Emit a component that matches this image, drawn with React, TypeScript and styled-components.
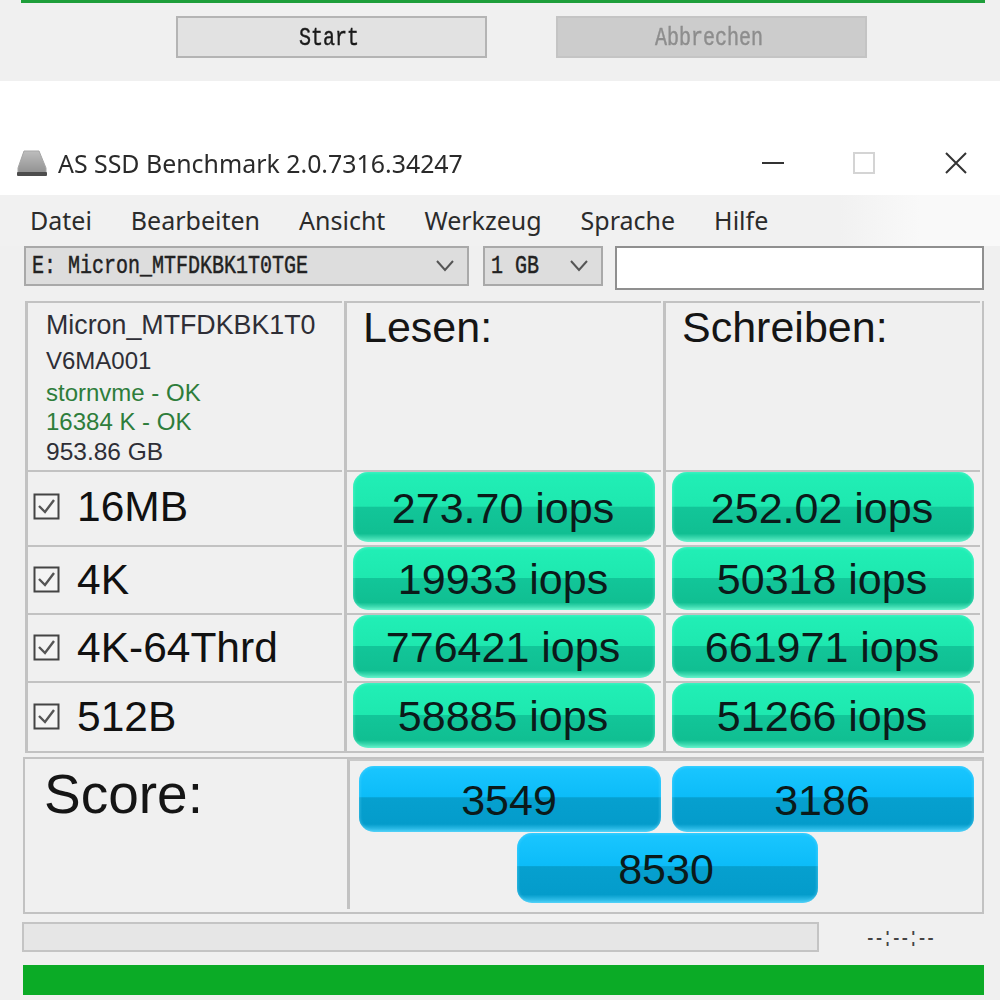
import React from "react";
import styled, { createGlobalStyle } from "styled-components";

const GlobalStyle = createGlobalStyle`
    html, body {
        margin: 0;
        padding: 0;
        background: #ffffff;
    }
    #root {
        width: 1000px;
        height: 1000px;
        overflow: hidden;
    }
`;

const Page = styled.div`
    width: 1000px;
    height: 1000px;
    display: flex;
    flex-direction: column;
    font-family: "Liberation Sans", Arial, sans-serif;
    color: #111;
    filter: blur(0.5px);
`;

const TopPanel = styled.div`
    height: 81px;
    flex: none;
    box-sizing: border-box;
    background: #f0f0f0;
    padding: 0 15px 0 21px;
`;

const TopBar = styled.div`
    height: 3px;
    background: #1e9e3a;
`;

const TopButtons = styled.div`
    display: flex;
    gap: 69px;
    margin: 13px 0 0 155px;
`;

const OldButton = styled.div<{ $disabled?: boolean }>`
    width: 311px;
    height: 42px;
    box-sizing: border-box;
    display: flex;
    align-items: center;
    justify-content: center;
    padding: 2px 5px 0 0;
    font-family: "Liberation Mono", monospace;
    font-size: 20px;
    border: 2px solid ${(p) => (p.$disabled ? "#c4c4c4" : "#b4b4b4")};
    background: ${(p) => (p.$disabled ? "#cccccc" : "#e2e2e2")};
    color: ${(p) => (p.$disabled ? "#8d8d8d" : "#1a1a1a")};
`;

// the original UI font is a tall, narrow bitmap face
const TallText = styled.span`
    display: inline-block;
    transform: scaleY(1.25);
    -webkit-text-stroke: 0.35px currentColor;
`;

const TitleBar = styled.div`
    margin-top: 67px;
    height: 47px;
    flex: none;
    box-sizing: border-box;
    display: flex;
    align-items: center;
    padding: 0 32px 18px 16px;
    background: #ffffff;
`;

const Title = styled.div`
    flex: 1;
    margin-left: 10px;
    font-family: "Noto Sans", sans-serif;
    font-size: 24.9px;
    color: #2a2a2a;
    white-space: nowrap;
`;

const WindowIcon = styled.svg`
    display: block;
    flex: none;
`;

const WindowControls = styled.div`
    display: flex;
    align-items: center;
    gap: 69px;
`;

const Window = styled.div`
    flex: 1;
    display: flex;
    flex-direction: column;
    background: #f0f0f0;
`;

const Menu = styled.div`
    height: 51px;
    flex: none;
    box-sizing: border-box;
    display: flex;
    align-items: center;
    gap: 39px;
    padding: 0 0 2px 30px;
    font-family: "Noto Sans", sans-serif;
    font-size: 25px;
    color: #2b2b2b;
    background: linear-gradient(to right, #f1f1f1 84%, #f9f9f9 92%);
`;

const Toolbar = styled.div`
    display: flex;
    gap: 14px;
    margin: 0 16px 0 24px;
    align-items: flex-start;
    height: 55px;
    flex: none;
`;

const Select = styled.div<{ $width: number }>`
    width: ${(p) => p.$width}px;
    height: 40px;
    box-sizing: border-box;
    display: flex;
    align-items: center;
    justify-content: space-between;
    padding: 0 13px 0 6px;
    background: #dddddd;
    border: 2px solid #a9a9a9;
    font-family: "Liberation Mono", monospace;
    font-size: 20px;
    color: #222;
    white-space: nowrap;
`;

const TextBox = styled.div`
    flex: 1;
    height: 44px;
    box-sizing: border-box;
    background: #ffffff;
    border: 2px solid #8f8f8f;
    margin-left: -2px;
`;

const Grid = styled.div`
    display: grid;
    grid-template-columns: 319px 319px 319px;
    grid-template-rows: 169px 75px 68px 68px 70px;
    margin-left: 25px;
    width: 959px;
    box-sizing: border-box;
    border-right: 2px solid #c2c2c2;
    border-bottom: 2px solid #c2c2c2;
    flex: none;
`;

const Cell = styled.div`
    box-sizing: border-box;
    border-top: 2px solid #c2c2c2;
    border-left: 3px solid #c2c2c2;
    margin-right: 2px;
    display: flex;
    min-width: 0;
`;

const InfoCell = styled(Cell)`
    display: block;
    padding: 4px 0 0 18px;
    font-size: 24px;
    color: #2e2e2e;
`;

const InfoLine = styled.div<{ $ok?: boolean; $height: number; $size?: number }>`
    height: ${(p) => p.$height}px;
    line-height: ${(p) => p.$height}px;
    font-size: ${(p) => p.$size ?? 24}px;
    color: ${(p) => (p.$ok ? "#2e7d3b" : "#2e2e36")};
    white-space: nowrap;
`;

const HeadCell = styled(Cell)`
    align-items: flex-start;
    padding: 1px 0 0 16px;
    font-size: 43px;
    line-height: 46px;
    color: #151515;
`;

const RowLabel = styled(Cell)<{ $first?: boolean }>`
    padding: 0 0 ${(p) => (p.$first ? 3 : 0)}px 5px;
    align-items: center;
    font-size: 42.5px;
    color: #111;
`;

const CheckBox = styled.svg`
    display: block;
    flex: none;
    margin-right: 16px;
`;

const Pill = styled.div<{ $blue?: boolean }>`
    box-sizing: border-box;
    display: flex;
    align-items: center;
    justify-content: center;
    padding: 2px 2px 0 0;
    border-radius: 15px;
    color: #0b1a1a;
    font-size: 43px;
    white-space: nowrap;
    background: ${(p) =>
        p.$blue
            ? "linear-gradient(#1ac6ff 0%, #0cbcf8 47%, #06a0cf 48%, #049ccb 88%, #44cdf6 100%)"
            : "linear-gradient(#21efb6 0%, #1ee8af 49%, #12c699 50%, #10bf92 88%, #62f0c8 100%)"};
    box-shadow: inset 0 0 3px 1px
        ${(p) => (p.$blue ? "rgba(110, 220, 255, 0.45)" : "rgba(110, 250, 215, 0.45)")};
`;

const ResultPill = styled(Pill)`
    width: 302px;
    margin: 0 0 3px 6px;
`;

const ScoreBox = styled.div`
    margin: 4px 0 0 23px;
    width: 961px;
    height: 157px;
    box-sizing: border-box;
    border: 2px solid #c2c2c2;
    display: grid;
    grid-template-columns: 322px 1fr;
    flex: none;
`;

const ScoreLabel = styled.div`
    font-size: 55px;
    line-height: 60px;
    padding: 5px 0 0 19px;
    color: #151515;
`;

const ScoreValues = styled.div`
    border-left: 3px solid #c2c2c2;
    border-top: 2px solid #c9c9c9;
    margin-bottom: 3px;
    display: grid;
    grid-template-columns: 302px 302px;
    grid-template-rows: 66px 70px;
    gap: 1px 11px;
    padding: 5px 0 0 9px;
`;

const TotalPill = styled(Pill)`
    grid-column: 1 / 3;
    justify-self: center;
    width: 301px;
    margin-left: 1px;
`;

const StatusRow = styled.div`
    display: flex;
    align-items: center;
    margin: 8px 0 0 22px;
    height: 30px;
    flex: none;
`;

const StatusTrack = styled.div`
    width: 797px;
    height: 30px;
    box-sizing: border-box;
    background: #e6e6e6;
    border: 2px solid #c4c4c4;
`;

const StatusTime = styled.div`
    width: 164px;
    margin: 3px 0 0 -1px;
    text-align: center;
    font-family: "Liberation Mono", monospace;
    font-size: 16px;
    font-weight: 700;
    letter-spacing: -1px;
    color: #444;
`;

const TimeColon = styled.span`
    display: inline-block;
    transform: scaleY(1.7);
    font-weight: 400;
`;

const GreenBar = styled.div`
    margin: 13px 16px 0 23px;
    height: 30px;
    flex: none;
    background: #0bab26;
`;

const rows = [
    { label: "16MB", read: "273.70 iops", write: "252.02 iops" },
    { label: "4K", read: "19933 iops", write: "50318 iops" },
    { label: "4K-64Thrd", read: "776421 iops", write: "661971 iops" },
    { label: "512B", read: "58885 iops", write: "51266 iops" },
];

function Check() {
    return (
        <CheckBox width="28" height="28" viewBox="0 0 28 28">
            <rect x="1.5" y="1.5" width="24" height="24" fill="#f4f4f4" stroke="#444" strokeWidth="2" />
            <path d="M6 13l6 6 9-12" fill="none" stroke="#555" strokeWidth="2.4" />
        </CheckBox>
    );
}

export default function App() {
    return (
        <Page>
            <GlobalStyle />
            <TopPanel>
                <TopBar />
                <TopButtons>
                    <OldButton>
                        <TallText>Start</TallText>
                    </OldButton>
                    <OldButton $disabled>
                        <TallText>Abbrechen</TallText>
                    </OldButton>
                </TopButtons>
            </TopPanel>
            <TitleBar>
                <WindowIcon width="32" height="26" viewBox="0 0 32 26">
                    <defs>
                        <linearGradient id="drive" x1="0" y1="0" x2="0" y2="1">
                            <stop offset="0" stopColor="#bdbdbd" />
                            <stop offset="1" stopColor="#8f8f8f" />
                        </linearGradient>
                    </defs>
                    <path d="M8 1h15l7 17v6H2v-6z" fill="url(#drive)" stroke="#a5a5a5" strokeLinejoin="round" />
                    <rect x="1" y="22" width="30" height="4" rx="1" fill="#4d4d4d" />
                </WindowIcon>
                <Title>AS SSD Benchmark 2.0.7316.34247</Title>
                <WindowControls>
                    <svg width="22" height="4" viewBox="0 0 22 4">
                        <rect width="22" height="2" y="1" fill="#333" />
                    </svg>
                    <svg width="22" height="22" viewBox="0 0 22 22">
                        <rect x="1" y="1" width="20" height="20" fill="none" stroke="#d4d4d4" strokeWidth="2" />
                    </svg>
                    <svg width="24" height="24" viewBox="0 0 24 24">
                        <path d="M2 2l20 20M22 2L2 22" stroke="#333" strokeWidth="2" />
                    </svg>
                </WindowControls>
            </TitleBar>
            <Window>
                <Menu>
                    <span>Datei</span>
                    <span>Bearbeiten</span>
                    <span>Ansicht</span>
                    <span>Werkzeug</span>
                    <span>Sprache</span>
                    <span>Hilfe</span>
                </Menu>
                <Toolbar>
                    <Select $width={445}>
                        <TallText>E: Micron_MTFDKBK1T0TGE</TallText>
                        <svg width="18" height="12" viewBox="0 0 18 12">
                            <path d="M1 1l8 9 8-9" fill="none" stroke="#555" strokeWidth="2" />
                        </svg>
                    </Select>
                    <Select $width={120}>
                        <TallText>1 GB</TallText>
                        <svg width="18" height="12" viewBox="0 0 18 12">
                            <path d="M1 1l8 9 8-9" fill="none" stroke="#555" strokeWidth="2" />
                        </svg>
                    </Select>
                    <TextBox />
                </Toolbar>
                <Grid>
                    <InfoCell>
                        <InfoLine $height={36} $size={26.8}>Micron_MTFDKBK1T0</InfoLine>
                        <InfoLine $height={35}>V6MA001</InfoLine>
                        <InfoLine $ok $height={29}>stornvme - OK</InfoLine>
                        <InfoLine $ok $height={30}>16384 K - OK</InfoLine>
                        <InfoLine $height={30} $size={24.5}>953.86 GB</InfoLine>
                    </InfoCell>
                    <HeadCell>Lesen:</HeadCell>
                    <HeadCell>Schreiben:</HeadCell>
                    {rows.map((row, index) => (
                        <React.Fragment key={row.label}>
                            <RowLabel $first={index === 0}>
                                <Check />
                                {row.label}
                            </RowLabel>
                            <Cell>
                                <ResultPill>{row.read}</ResultPill>
                            </Cell>
                            <Cell>
                                <ResultPill>{row.write}</ResultPill>
                            </Cell>
                        </React.Fragment>
                    ))}
                </Grid>
                <ScoreBox>
                    <ScoreLabel>Score:</ScoreLabel>
                    <ScoreValues>
                        <Pill $blue>3549</Pill>
                        <Pill $blue>3186</Pill>
                        <TotalPill $blue>8530</TotalPill>
                    </ScoreValues>
                </ScoreBox>
                <StatusRow>
                    <StatusTrack />
                    <StatusTime>
                        --<TimeColon>:</TimeColon>--<TimeColon>:</TimeColon>--
                    </StatusTime>
                </StatusRow>
                <GreenBar />
            </Window>
        </Page>
    );
}
